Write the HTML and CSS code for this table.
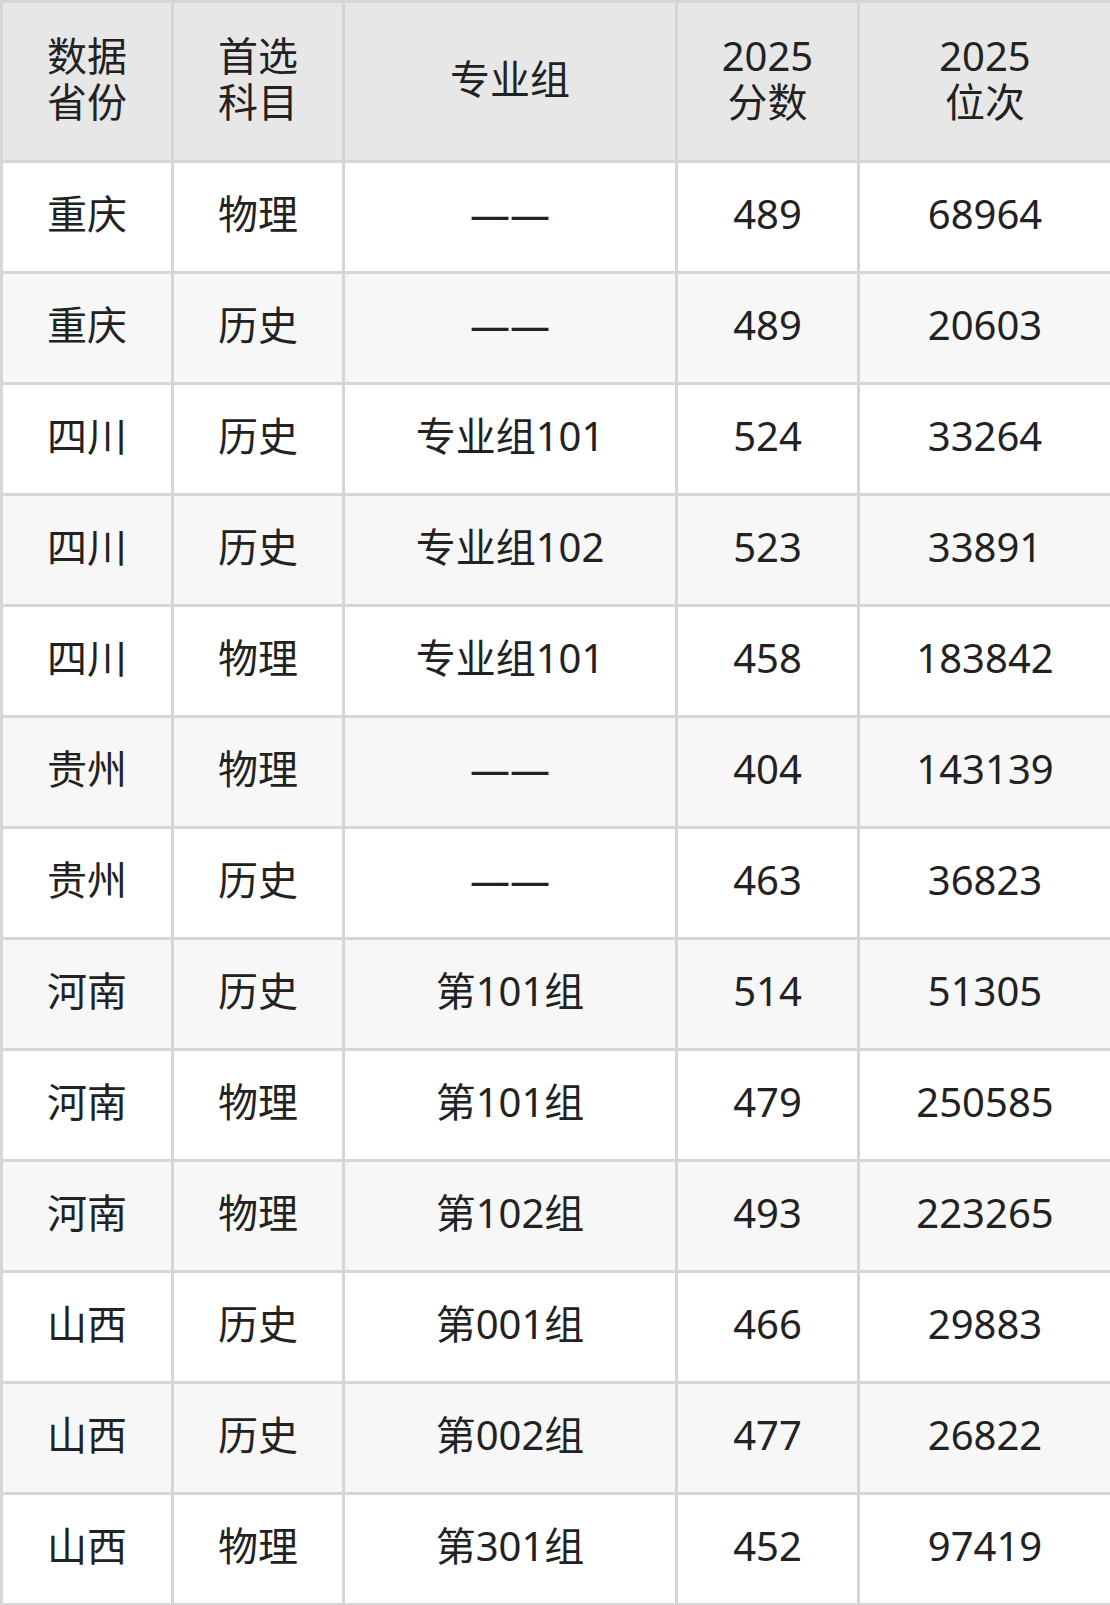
FILE: index.html
```html
<!DOCTYPE html>
<html lang="zh-CN">
<head>
<meta charset="utf-8">
<title>2025 分数位次</title>
<link rel="stylesheet" href="styles.css">
</head>
<body>
<table class="score-table">
  <colgroup>
    <col class="c1"><col class="c2"><col class="c3"><col class="c4"><col class="c5">
  </colgroup>
  <thead>
    <tr>
      <th>数据<br>省份</th>
      <th>首选<br>科目</th>
      <th>专业组</th>
      <th>2025<br>分数</th>
      <th>2025<br>位次</th>
    </tr>
  </thead>
  <tbody>
    <tr><td>重庆</td><td>物理</td><td>——</td><td>489</td><td>68964</td></tr>
    <tr><td>重庆</td><td>历史</td><td>——</td><td>489</td><td>20603</td></tr>
    <tr><td>四川</td><td>历史</td><td>专业组101</td><td>524</td><td>33264</td></tr>
    <tr><td>四川</td><td>历史</td><td>专业组102</td><td>523</td><td>33891</td></tr>
    <tr><td>四川</td><td>物理</td><td>专业组101</td><td>458</td><td>183842</td></tr>
    <tr><td>贵州</td><td>物理</td><td>——</td><td>404</td><td>143139</td></tr>
    <tr><td>贵州</td><td>历史</td><td>——</td><td>463</td><td>36823</td></tr>
    <tr><td>河南</td><td>历史</td><td>第101组</td><td>514</td><td>51305</td></tr>
    <tr><td>河南</td><td>物理</td><td>第101组</td><td>479</td><td>250585</td></tr>
    <tr><td>河南</td><td>物理</td><td>第102组</td><td>493</td><td>223265</td></tr>
    <tr><td>山西</td><td>历史</td><td>第001组</td><td>466</td><td>29883</td></tr>
    <tr><td>山西</td><td>历史</td><td>第002组</td><td>477</td><td>26822</td></tr>
    <tr><td>山西</td><td>物理</td><td>第301组</td><td>452</td><td>97419</td></tr>
  </tbody>
</table>
</body>
</html>
```

FILE: styles.css
```css
html, body {
  margin: 0;
  padding: 0;
  background: #ffffff;
}

.score-table {
  width: 1110px;
  border-collapse: collapse;
  table-layout: fixed;
  font-family: "Noto Sans", "Noto Sans CJK SC", sans-serif;
  font-size: 40px;
  color: #222222;
  border: 3px solid #d6d6d6;
}

.c1 { width: 171px; }
.c2 { width: 171px; }
.c3 { width: 333px; }
.c4 { width: 182px; }
.c5 { width: 253px; }

.score-table th,
.score-table td {
  border: 3px solid #d6d6d6;
  text-align: center;
  vertical-align: middle;
  padding: 0 0 6px 0;
}

.score-table th {
  font-weight: 400;
  background: #e7e7e7;
  line-height: 46px;
  height: 151px;
}

.score-table td {
  height: 102px;
  line-height: 48px;
}

.score-table tbody tr:nth-child(even) td {
  background: #f7f7f7;
}
```
